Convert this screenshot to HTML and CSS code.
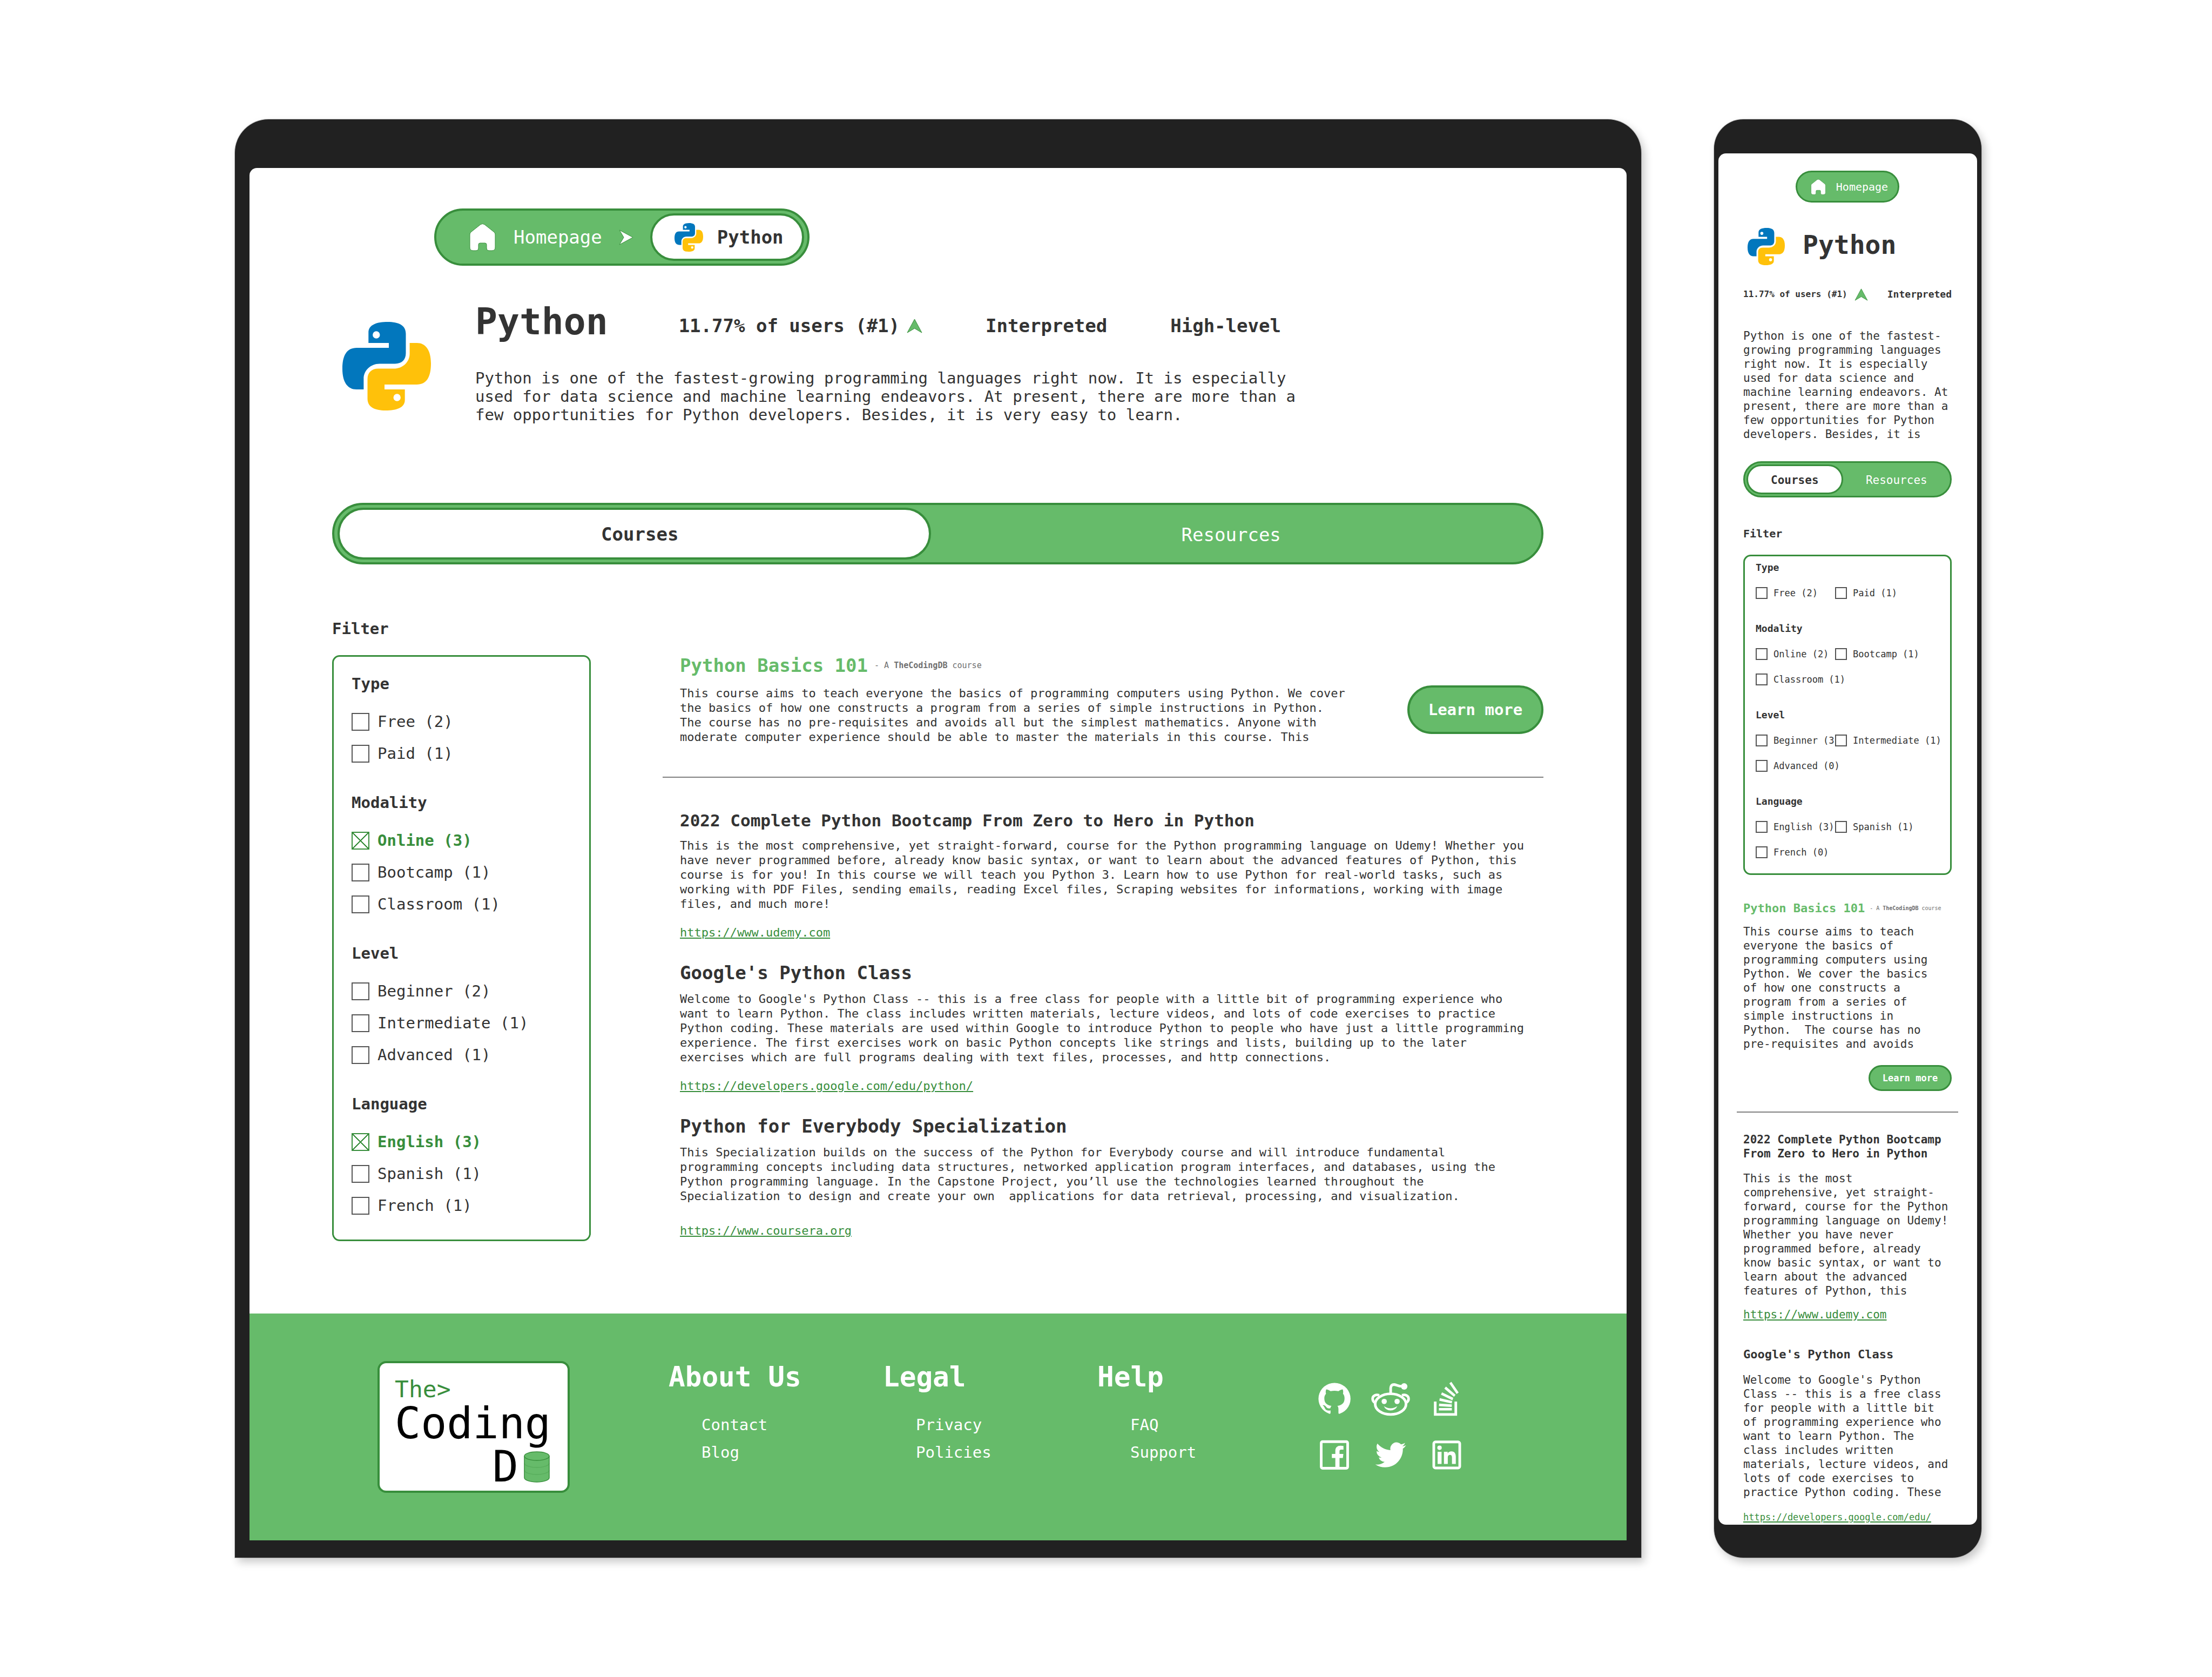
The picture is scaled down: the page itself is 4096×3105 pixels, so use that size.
FILE: index.html
```html
<!DOCTYPE html>
<html lang="en">
<head>
<meta charset="utf-8">
<meta name="viewport" content="width=device-width, initial-scale=1">
<title>Python - TheCodingDB</title>
<link rel="stylesheet" href="styles.css">
</head>
<body>
<svg class="sprite" aria-hidden="true">
  <symbol id="python" viewBox="0 0 164 164">
    <path fill="#0277bd" fill-rule="evenodd" d="M48.300 39V20C48 5 64 0 84 0C104 0 117.500 6 117.500 22V58C117.500 70 110 77.400 97.500 77.400H69C52 77.400 39.400 90 39.400 105V125H26C10 125 0 112 0 87C0 62 8 48 26.600 48H86V39ZM69.500 24a6.700 6.700 0 1 0-13.400 0a6.700 6.700 0 1 0 13.400 0z"/>
    <path fill="#ffc10a" fill-rule="evenodd" transform="rotate(180 82 82)" d="M48.300 39V20C48 5 64 0 84 0C104 0 117.500 6 117.500 22V58C117.500 70 110 77.400 97.500 77.400H69C52 77.400 39.400 90 39.400 105V125H26C10 125 0 112 0 87C0 62 8 48 26.600 48H86V39ZM69.500 24a6.700 6.700 0 1 0-13.400 0a6.700 6.700 0 1 0 13.400 0z"/>
  </symbol>
  <symbol id="home" viewBox="-1 -1 49 52">
    <path fill="#fff" stroke="#388e3c" d="M20 1.500Q23.500-.5 27 1.500L44 15Q47 17 47 20V44Q47 50 41 50H36Q31 50 31 45V39Q31 36 28 36H19Q16 36 16 39V45Q16 50 11 50H6Q0 50 0 44V20Q0 17 3 15Z"/>
  </symbol>
  <symbol id="next" viewBox="-1 -1 27 29">
    <path fill="#fff" stroke="#388e3c" stroke-linejoin="round" d="M0 0L25 13.500L0 27L8 13.500Z"/>
  </symbol>
  <symbol id="up" viewBox="-1 -1 29 27">
    <path fill="#66bb6a" stroke="#388e3c" stroke-linejoin="round" d="M0 25L13.500 0L27 25L13.500 17Z"/>
  </symbol>
</svg>

<main class="showcase">
  <section class="device device-desktop">
    <div class="screen">
      <nav class="breadcrumb">
        <a class="crumb" href="#home"><svg class="icon-home"><use href="#home"/></svg>Homepage</a>
        <svg class="icon-next"><use href="#next"/></svg>
        <a class="crumb crumb-current" href="#python"><svg class="icon-lang"><use href="#python"/></svg>Python</a>
      </nav>

      <header class="hero">
        <svg class="hero-logo"><use href="#python"/></svg>
        <div class="hero-body">
          <div class="hero-top">
            <h1 class="hero-title">Python</h1>
            <div class="facts">
              <span class="fact">11.77% of users (#1)<svg class="icon-up"><use href="#up"/></svg></span>
              <span class="fact">Interpreted</span>
              <span class="fact">High-level</span>
            </div>
          </div>
          <p class="hero-text">Python is one of the fastest-growing programming languages right now. It is especially used for data science and machine learning endeavors. At present, there are more than a few opportunities for Python developers. Besides, it is very easy to learn.</p>
        </div>
      </header>

      <div class="tabs">
        <button class="tab tab-active" type="button">Courses</button>
        <button class="tab" type="button">Resources</button>
      </div>

      <div class="content">
        <aside class="filter">
          <h2 class="filter-title">Filter</h2>
          <form class="filter-box">
            <section class="group">
              <h3 class="group-title">Type</h3>
              <label class="option"><input type="checkbox" class="tick"><span class="option-name">Free (2)</span></label>
              <label class="option"><input type="checkbox" class="tick"><span class="option-name">Paid (1)</span></label>
            </section>
            <section class="group">
              <h3 class="group-title">Modality</h3>
              <label class="option"><input type="checkbox" class="tick" checked><span class="option-name">Online (3)</span></label>
              <label class="option"><input type="checkbox" class="tick"><span class="option-name">Bootcamp (1)</span></label>
              <label class="option"><input type="checkbox" class="tick"><span class="option-name">Classroom (1)</span></label>
            </section>
            <section class="group">
              <h3 class="group-title">Level</h3>
              <label class="option"><input type="checkbox" class="tick"><span class="option-name">Beginner (2)</span></label>
              <label class="option"><input type="checkbox" class="tick"><span class="option-name">Intermediate (1)</span></label>
              <label class="option"><input type="checkbox" class="tick"><span class="option-name">Advanced (1)</span></label>
            </section>
            <section class="group">
              <h3 class="group-title">Language</h3>
              <label class="option"><input type="checkbox" class="tick" checked><span class="option-name">English (3)</span></label>
              <label class="option"><input type="checkbox" class="tick"><span class="option-name">Spanish (1)</span></label>
              <label class="option"><input type="checkbox" class="tick"><span class="option-name">French (1)</span></label>
            </section>
          </form>
        </aside>

        <div class="courses">
          <article class="featured">
            <div class="featured-body">
              <div class="featured-head">
                <h2 class="featured-title">Python Basics 101</h2>
                <span class="byline">- A <b>TheCodingDB</b> course</span>
              </div>
              <p class="course-text featured-text">This course aims to teach everyone the basics of programming computers using Python. We cover the basics of how one constructs a program from a series of simple instructions in Python. The course has no pre-requisites and avoids all but the simplest mathematics. Anyone with moderate computer experience should be able to master the materials in this course. This</p>
            </div>
            <button class="learn" type="button">Learn more</button>
          </article>
          <hr class="divider">
          <article class="course">
            <h2 class="course-title course-title-long">2022 Complete Python Bootcamp From Zero to Hero in Python</h2>
            <p class="course-text">This is the most comprehensive, yet straight-forward, course for the Python programming language on Udemy! Whether you have never programmed before, already know basic syntax, or want to learn about the advanced features of Python, this course is for you! In this course we will teach you Python 3. Learn how to use Python for real-world tasks, such as working with PDF Files, sending emails, reading Excel files, Scraping websites for informations, working with image files, and much more!</p>
            <a class="course-link" href="#udemy">https://www.udemy.com</a>
          </article>
          <article class="course">
            <h2 class="course-title">Google's Python Class</h2>
            <p class="course-text">Welcome to Google's Python Class -- this is a free class for people with a little bit of programming experience who want to learn Python. The class includes written materials, lecture videos, and lots of code exercises to practice Python coding. These materials are used within Google to introduce Python to people who have just a little programming experience. The first exercises work on basic Python concepts like strings and lists, building up to the later exercises which are full programs dealing with text files, processes, and http connections.</p>
            <a class="course-link" href="#google">https://developers.google.com/edu/python/</a>
          </article>
          <article class="course">
            <h2 class="course-title">Python for Everybody Specialization</h2>
            <p class="course-text">This Specialization builds on the success of the Python for Everybody course and will introduce fundamental programming concepts including data structures, networked application program interfaces, and databases, using the Python programming language. In the Capstone Project, you’ll use the technologies learned throughout the Specialization to design and create your own&nbsp; applications for data retrieval, processing, and visualization.</p>
            <a class="course-link" href="#coursera">https://www.coursera.org</a>
          </article>
        </div>
      </div>

      <footer class="footer">
        <a class="logo" href="#home">
          <span class="logo-the">The&gt;</span>
          <span class="logo-word">Coding</span>
          <span class="logo-word logo-db">D<svg class="logo-disk" viewBox="-1 -1 48 58" role="img" aria-label="B">
            <path fill="#66bb6a" stroke="#388e3c" stroke-width="1.500" d="M0 8A23 8 0 0 1 46 8V48A23 8 0 0 1 0 48Z"/>
            <path fill="none" stroke="#388e3c" stroke-width="1.500" d="M0 8A23 8 0 0 0 46 8"/>
            <path fill="none" stroke="#388e3c" stroke-opacity=".3" stroke-width="1.500" d="M0 21A23 8 0 0 0 46 21M0 34A23 8 0 0 0 46 34"/>
          </svg></span>
        </a>
        <nav class="links">
          <section class="links-col">
            <h2 class="links-title">About Us</h2>
            <a class="links-item" href="#contact">Contact</a>
            <a class="links-item" href="#blog">Blog</a>
          </section>
          <section class="links-col">
            <h2 class="links-title">Legal</h2>
            <a class="links-item" href="#privacy">Privacy</a>
            <a class="links-item" href="#policies">Policies</a>
          </section>
          <section class="links-col">
            <h2 class="links-title">Help</h2>
            <a class="links-item" href="#faq">FAQ</a>
            <a class="links-item" href="#support">Support</a>
          </section>
        </nav>
        <div class="social">
          <a href="#github" aria-label="GitHub"><svg viewBox="74 88 325 289"><path d="M237 99A132.500 132.500 0 0 1 281 357Q270 360 270 351V315Q270 298 261 291C300 286 321 267 321 228C321 212 317 200 308 190C311 178 310 165 306 154C294 155 282 160 270 168C248 163 226 163 204 168C192 160 180 155 168 154C163 166 162 178 166 190C156 201 152 213 152 228C152 267 173 286 212 291C206 297 204 303 203 310C190 315 175 311 167 299C160 289 150 283 139 286C137 288 145 291 150 298C158 312 160 330 190 331Q199 331 204 328V350Q204 359 193 357A132.500 132.500 0 0 1 237 99Z"/></svg></a>
          <a href="#reddit" aria-label="Reddit"><svg viewBox="546 88 325 289"><g fill="none" stroke="#fff" stroke-width="22"><ellipse cx="708.500" cy="276.500" rx="129" ry="86.500"/><path d="M709 190V143Q711 113 738 113C762 115 768 127 805 128"/><path d="M613 203C592 194 558 202 558 232Q558 250 577 265"/><path d="M804 203C825 194 859 202 859 232Q859 250 840 265"/></g><circle cx="822" cy="129" r="27"/><circle cx="655" cy="254" r="22"/><circle cx="763" cy="254" r="22"/><path d="M652 294Q708 330 765 294Q748 330 708 330Q668 330 652 294Z"/></svg></a>
          <a href="#stackoverflow" aria-label="Stack Overflow"><svg viewBox="1016 88 325 289"><path fill="none" stroke="#fff" stroke-width="22" d="M1082 255V363H1254V255"/><path d="M1113 309H1221V330H1113ZM1115 272L1221 279L1220 300L1113 293ZM1120 227L1224 250L1220 271L1116 248ZM1139 178L1233 224L1226 245L1130 197ZM1172 130L1252 199L1239 216L1158 147ZM1217 90L1278 180L1261 192L1200 103Z"/></svg></a>
          <a href="#facebook" aria-label="Facebook"><svg viewBox="74 558 325 289"><rect x="126" y="591" width="221" height="222" rx="11" fill="none" stroke="#fff" stroke-width="22"/><path d="M244 805V727H215V694H244V668C244 640 260 625 288 625Q302 625 312 627V657H293Q279 657 279 670V694H311L307 727H279V805Z"/></svg></a>
          <a href="#twitter" aria-label="Twitter"><svg viewBox="546 558 325 289"><path transform="translate(581 573) scale(10.670)" d="M23.953 4.570a10 10 0 01-2.825.775 4.958 4.958 0 002.163-2.723c-.951.555-2.005.959-3.127 1.184a4.920 4.920 0 00-8.384 4.482C7.690 8.095 4.067 6.130 1.640 3.162a4.822 4.822 0 00-.666 2.475c0 1.710.870 3.213 2.188 4.096a4.904 4.904 0 01-2.228-.616v.060a4.923 4.923 0 003.946 4.827 4.996 4.996 0 01-2.212.085 4.936 4.936 0 004.604 3.417 9.867 9.867 0 01-6.102 2.105c-.390 0-.779-.023-1.170-.067a13.995 13.995 0 007.557 2.209c9.053 0 13.998-7.496 13.998-13.985 0-.210 0-.420-.015-.630A9.935 9.935 0 0024 4.590z"/></svg></a>
          <a href="#linkedin" aria-label="LinkedIn"><svg viewBox="1016 558 325 289"><rect x="1070" y="593" width="217" height="218" rx="14" fill="none" stroke="#fff" stroke-width="22"/><circle cx="1118" cy="642" r="18.500"/><path d="M1102 675H1135V777H1102ZM1155 675H1186V689Q1196 672 1218 672C1244 672 1254 690 1254 716V777H1222V724Q1222 701 1206 701Q1187 701 1187 724V777H1155Z"/></svg></a>
        </div>
      </footer>
    </div>
  </section>

  <section class="device device-phone">
    <div class="screen">
      <nav class="breadcrumb">
        <a class="crumb" href="#m-home"><svg class="icon-home"><use href="#home"/></svg>Homepage</a>
      </nav>

      <header class="hero">
        <div class="hero-top">
          <svg class="hero-logo"><use href="#python"/></svg>
          <h1 class="hero-title">Python</h1>
        </div>
        <div class="facts">
          <span class="fact fact-rank">11.77% of users (#1)<svg class="icon-up"><use href="#up"/></svg></span>
          <span class="fact">Interpreted</span>
        </div>
        <p class="hero-text">Python is one of the fastest-growing programming languages right now. It is especially used for data science and machine learning endeavors. At present, there are more than a few opportunities for Python developers. Besides, it is</p>
      </header>

      <div class="tabs">
        <button class="tab tab-active" type="button">Courses</button>
        <button class="tab" type="button">Resources</button>
      </div>

      <aside class="filter">
        <h2 class="filter-title">Filter</h2>
        <form class="filter-box">
          <section class="group">
            <h3 class="group-title">Type</h3>
            <label class="option"><input type="checkbox" class="tick"><span class="option-name">Free (2)</span></label>
            <label class="option"><input type="checkbox" class="tick"><span class="option-name">Paid (1)</span></label>
          </section>
          <section class="group">
            <h3 class="group-title">Modality</h3>
            <label class="option"><input type="checkbox" class="tick"><span class="option-name">Online (2)</span></label>
            <label class="option"><input type="checkbox" class="tick"><span class="option-name">Bootcamp (1)</span></label>
            <label class="option option-wide"><input type="checkbox" class="tick"><span class="option-name">Classroom (1)</span></label>
          </section>
          <section class="group">
            <h3 class="group-title">Level</h3>
            <label class="option"><input type="checkbox" class="tick"><span class="option-name">Beginner (3)</span></label>
            <label class="option"><input type="checkbox" class="tick"><span class="option-name">Intermediate (1)</span></label>
            <label class="option option-wide"><input type="checkbox" class="tick"><span class="option-name">Advanced (0)</span></label>
          </section>
          <section class="group">
            <h3 class="group-title">Language</h3>
            <label class="option"><input type="checkbox" class="tick"><span class="option-name">English (3)</span></label>
            <label class="option"><input type="checkbox" class="tick"><span class="option-name">Spanish (1)</span></label>
            <label class="option option-wide"><input type="checkbox" class="tick"><span class="option-name">French (0)</span></label>
          </section>
        </form>
      </aside>

      <article class="featured">
        <div class="featured-head">
          <h2 class="featured-title">Python Basics 101</h2>
          <span class="byline">- A <b>TheCodingDB</b> course</span>
        </div>
        <p class="course-text featured-text">This course aims to teach everyone the basics of programming computers using Python. We cover the basics of how one constructs a program from a series of simple instructions in Python.&nbsp; The course has no pre-requisites and avoids</p>
        <button class="learn" type="button">Learn more</button>
      </article>
      <hr class="divider">
      <article class="course">
        <h2 class="course-title course-title-long">2022 Complete Python Bootcamp From Zero to Hero in Python</h2>
        <p class="course-text">This is the most comprehensive, yet straight-forward, course for the Python programming language on Udemy! Whether you have never programmed before, already know basic syntax, or want to learn about the advanced features of Python, this</p>
        <a class="course-link" href="#m-udemy">https://www.udemy.com</a>
      </article>
      <article class="course">
        <h2 class="course-title">Google's Python Class</h2>
        <p class="course-text">Welcome to Google's Python Class -- this is a free class for people with a little bit of programming experience who want to learn Python. The class includes written materials, lecture videos, and lots of code exercises to practice Python coding. These</p>
        <a class="course-link course-link-small" href="#m-google">https://developers.google.com/edu/</a>
      </article>
    </div>
  </section>
</main>
</body>
</html>
```
FILE: styles.css
```css
:root {
  --green: #66bb6a;
  --green-dark: #388e3c;
  --ink: #333;
  --frame: #212121;
}

* { box-sizing: border-box; }

body {
  margin: 0;
  background: #fff;
  color: var(--ink);
  font-family: "DejaVu Sans Mono", "Liberation Mono", monospace;
}

h1, h2, h3, p { margin: 0; }
a { color: inherit; text-decoration: none; }
button { font-family: inherit; color: inherit; cursor: pointer; }
svg { display: block; flex: none; }
.sprite { position: absolute; width: 0; height: 0; }

/* Device frames */
.showcase {
  display: grid;
  grid-template-columns: 2604fr 495fr;
  column-gap: 135px;
  padding: 221px 427px 220px 435px;
}

.device {
  display: flex;
  background: var(--frame);
  box-shadow: 0 0 0 1px rgba(0, 0, 0, .2), 6px 8px 16px rgba(0, 0, 0, .22);
}

.screen {
  flex: 1;
  min-width: 0;
  display: flex;
  flex-direction: column;
  background: #fff;
  overflow: hidden;
}

.device-desktop { padding: 90px 27px 32px; border-radius: 62px 62px 0 0; }
.device-desktop .screen { padding-top: 75px; border-radius: 14px 14px 0 0; }
.device-phone { padding: 63px 8px 61px; border-radius: 54px; }
.device-phone .screen { padding: 32px 47px 0 46px; border-radius: 14px; }

/* Breadcrumb */
.breadcrumb {
  display: flex;
  align-items: center;
  align-self: flex-start;
  gap: 31px;
  margin-left: 342px;
  padding: 5px 6px 5px 61px;
  border: 4px solid var(--green-dark);
  border-radius: 53px;
  background: var(--green);
  color: #fff;
  font-size: 34px;
  line-height: 40px;
}
.crumb { display: flex; align-items: center; gap: 33px; }
.crumb-current {
  gap: 26px;
  height: 88px;
  padding: 0 34px 0 41px;
  border: 4px solid var(--green-dark);
  border-radius: 44px;
  background: #fff;
  color: var(--ink);
  font-weight: bold;
}
.icon-home { width: 49px; height: 52px; }
.icon-next { width: 27px; height: 29px; }
.icon-lang { width: 53px; height: 53px; }
.icon-up { width: 29px; height: 27px; }

/* Language intro */
.hero { display: flex; gap: 82px; margin: 64px 154px 0 172px; }
.hero-logo { width: 164px; height: 164px; margin-top: 40px; }
.hero-top { display: flex; align-items: flex-end; gap: 131px; }
.hero-title { font-size: 68px; line-height: 80px; }
.facts { display: flex; gap: 117px; padding-bottom: 13px; font-size: 34px; line-height: 40px; font-weight: bold; }
.fact { display: flex; align-items: center; gap: 13px; }
.hero-text { max-width: 1530px; margin-top: 47px; font-size: 29px; line-height: 34px; }

/* Tabs */
.tabs {
  display: grid;
  grid-template-columns: 99fr 100fr;
  margin: 146px 154px 0 153px;
  padding: 5px 19px 5px 6px;
  border: 4px solid var(--green-dark);
  border-radius: 58px;
  background: var(--green);
}
.tab {
  height: 96px;
  padding: 4px 0 0;
  border: 0;
  background: none;
  color: #fff;
  font-size: 34px;
  line-height: 40px;
}
.tab-active {
  padding: 2px 0 0 20px;
  border: 4px solid var(--green-dark);
  border-radius: 48px;
  background: #fff;
  color: var(--ink);
  font-weight: bold;
}

/* Filter */
.content {
  display: grid;
  grid-template-columns: 479px 1fr;
  column-gap: 133px;
  align-items: start;
  margin: 102px 154px 134px 153px;
}
.filter-title { font-size: 29px; line-height: 34px; }
.filter-box {
  display: grid;
  row-gap: 57px;
  margin-top: 32px;
  padding: 33px 33px 46px;
  border: 3px solid var(--green-dark);
  border-radius: 14px;
}
.group { display: grid; row-gap: 26px; }
.group-title { margin-bottom: 11px; font-size: 29px; line-height: 34px; }
.option { display: flex; align-items: center; gap: 15px; font-size: 29px; line-height: 33px; }
.option-name { white-space: nowrap; overflow: hidden; }
.tick {
  appearance: none;
  flex: none;
  width: 33px;
  height: 33px;
  margin: 0;
  border: 2px solid #555;
}
.tick:checked {
  border-color: var(--green-dark);
  background:
    linear-gradient(to top right, transparent calc(50% - 1px), var(--green-dark) calc(50% - 1px) calc(50% + 1px), transparent calc(50% + 1px)),
    linear-gradient(to bottom right, transparent calc(50% - 1px), var(--green-dark) calc(50% - 1px) calc(50% + 1px), transparent calc(50% + 1px));
}
.tick:checked + .option-name { color: var(--green-dark); font-weight: bold; }

/* Courses */
.courses { display: flex; flex-direction: column; padding-top: 65px; }
.featured { display: flex; justify-content: space-between; align-items: flex-start; padding-left: 32px; }
.featured-head { display: flex; align-items: center; gap: 12px; }
.featured-title { color: var(--green); font-size: 34px; line-height: 40px; white-space: nowrap; }
.byline { color: #707070; font-size: 15px; line-height: 20px; white-space: nowrap; }
.featured .featured-text { max-width: 1240px; margin-top: 18px; }
.learn {
  flex: none;
  width: 252px;
  height: 90px;
  margin-top: 57px;
  padding: 0;
  border: 4px solid var(--green-dark);
  border-radius: 45px;
  background: var(--green);
  color: #fff;
  font-size: 29px;
  line-height: 34px;
  font-weight: bold;
}
.divider { width: 100%; height: 2px; margin: 60px 0 20px; border: 0; background: #808080; }
.course { display: flex; flex-direction: column; align-items: flex-start; margin-top: 41px; padding-left: 32px; }
.course-title { font-size: 34px; line-height: 40px; }
.course-title-long { font-size: 31px; line-height: 36px; }
.course-text { max-width: 1570px; font-size: 22px; line-height: 27px; }
.course .course-text { margin-top: 15px; }
.course-link {
  margin-top: 26px;
  color: var(--green-dark);
  font-size: 22px;
  line-height: 27px;
  text-decoration: underline;
  text-decoration-thickness: 2px;
  text-underline-offset: 2px;
}
.course:last-child .course-link { margin-top: 37px; }

/* Footer */
.footer {
  display: flex;
  align-items: flex-start;
  margin-top: auto;
  padding: 88px 237px 88px;
  background: var(--green);
  color: #fff;
}
.logo {
  display: flex;
  flex-direction: column;
  flex: none;
  width: 356px;
  height: 244px;
  padding: 24px 33px 0 28px;
  border: 4px solid var(--green-dark);
  border-radius: 16px;
  background: #fff;
  color: #000;
}
.logo-the { color: var(--green-dark); font-size: 43px; line-height: 48px; }
.logo-word { font-size: 80px; line-height: 80px; }
.logo-db { display: flex; justify-content: flex-end; align-items: center; gap: 10px; }
.logo-disk { width: 48px; height: 58px; }
.links { display: grid; grid-template-columns: repeat(3, 397px); margin-left: 183px; }
.links-col { display: flex; flex-direction: column; gap: 17px; }
.links-title { margin-bottom: 24px; font-size: 51px; line-height: 60px; }
.links-item { margin-left: 61px; font-size: 29px; line-height: 34px; }
.social { display: grid; grid-template-columns: repeat(3, 72px); gap: 40px 32px; margin: 38px 0 0 6px; }
.social svg { width: 72px; height: 64px; fill: #fff; }

/* Phone layout */
.device-phone .breadcrumb {
  align-self: center;
  margin: 0;
  padding: 0 18px 0 25px;
  height: 59px;
  border-width: 3px;
  font-size: 20px;
  line-height: 24px;
}
.device-phone .crumb { gap: 19px; }
.device-phone .icon-home { width: 28px; height: 30px; }
.device-phone .icon-up { width: 25px; height: 23px; }
.device-phone .hero { display: block; margin: 47px 0 0; }
.device-phone .hero-top { align-items: center; gap: 33px; padding-left: 8px; }
.device-phone .hero-logo { width: 69px; height: 69px; margin: 0; }
.device-phone .hero-title { padding-bottom: 8px; font-size: 48px; line-height: 56px; }
.device-phone .facts { justify-content: space-between; gap: 0; margin-top: 42px; padding: 0; font-size: 18px; line-height: 24px; }
.device-phone .fact-rank { font-size: 16px; }
.device-phone .hero-text { max-width: 385px; margin-top: 52px; font-size: 21px; line-height: 26px; }
.device-phone .tabs { grid-template-columns: 90fr 100fr; margin: 37px 0 0; padding: 3px 0 3px 3px; border-width: 3px; }
.device-phone .tab { height: 55px; padding: 2px 0 0; font-size: 21px; line-height: 26px; }
.device-phone .tab-active { border-width: 3px; }
.device-phone .filter { margin-top: 55px; }
.device-phone .filter-title { font-size: 20px; line-height: 24px; }
.device-phone .filter-box { row-gap: 44px; margin-top: 27px; padding: 10px 0 28px 20px; }
.device-phone .group { grid-template-columns: 147px 1fr; row-gap: 25px; }
.device-phone .group-title { grid-column: 1 / -1; margin: 0; font-size: 18px; line-height: 22px; }
.device-phone .option { gap: 11px; min-width: 0; font-size: 17px; line-height: 22px; }
.device-phone .option-wide { grid-column: 1 / -1; }
.device-phone .tick { width: 22px; height: 22px; }
.device-phone .featured { display: flex; flex-direction: column; margin-top: 48px; padding: 0; }
.device-phone .featured-head { gap: 9px; }
.device-phone .featured-title { font-size: 22px; line-height: 28px; }
.device-phone .byline { font-size: 10px; line-height: 14px; }
.device-phone .course-text { font-size: 21px; line-height: 26px; }
.device-phone .featured .featured-text { max-width: 372px; margin-top: 16px; }
.device-phone .learn { align-self: flex-end; width: 154px; height: 48px; margin-top: 26px; border-width: 3px; font-size: 17px; line-height: 22px; }
.device-phone .divider { width: auto; margin: 38px -12px 0; flex: none; }
.device-phone .course { margin-top: 47px; padding: 0; }
.device-phone .divider + .course { margin-top: 37px; }
.device-phone .course-title { font-size: 22px; line-height: 28px; }
.device-phone .course-title-long { font-size: 21px; line-height: 26px; }
.device-phone .course .course-text { max-width: 385px; margin-top: 20px; }
.device-phone .course-link { margin-top: 18px; font-size: 21px; line-height: 26px; }
.device-phone .course .course-link-small { margin-top: 22px; font-size: 17px; line-height: 22px; }
```
